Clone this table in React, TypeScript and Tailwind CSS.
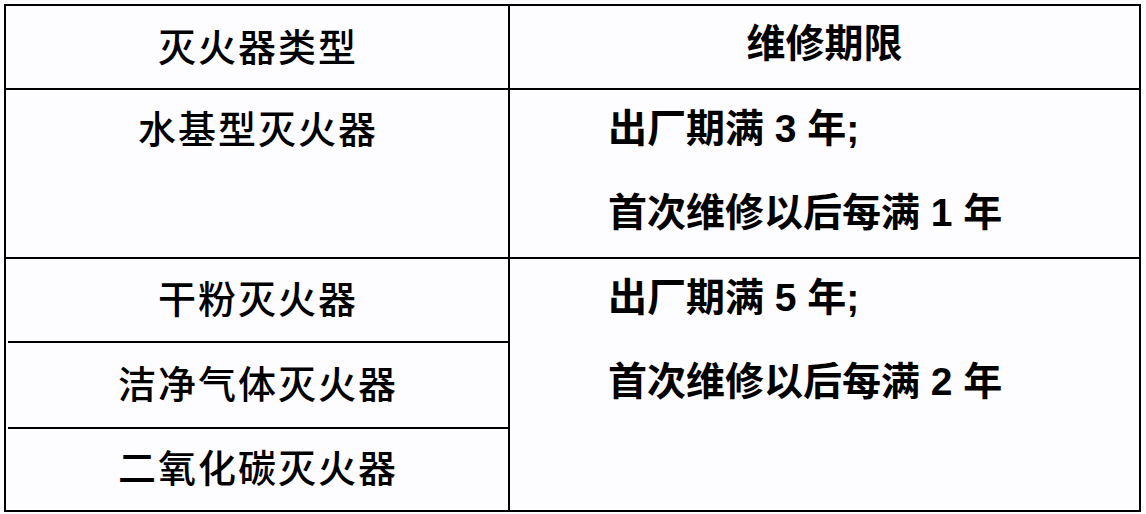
export default function App() {
  const leftFont = "font-['Noto_Sans_CJK_SC','Noto_Sans_CJK_JP',serif] font-medium text-[38px] tracking-[2px] pl-[2px]";
  const rightFont = "font-['Liberation_Sans','Noto_Sans_CJK_SC',sans-serif] font-bold text-[39px]";

  return (
    <div className="w-[1146px] h-[514px] bg-[#fdfcfe] pt-[4px] pl-[4px] text-black">
      <div className="w-[1137px] border-2 border-black">
        {/* header */}
        <div className="flex h-[84px] border-b-2 border-black">
          <div className={`w-[504px] border-r-2 border-black flex items-center justify-center pb-[6px] ${leftFont}`}>
            灭火器类型
          </div>
          <div className={`flex-1 flex items-center justify-center pb-[6px] ${rightFont}`}>
            维修期限
          </div>
        </div>

        {/* water-based */}
        <div className="flex h-[169px] border-b-2 border-black">
          <div className={`w-[504px] border-r-2 border-black text-center leading-[74px] ${leftFont}`}>
            水基型灭火器
          </div>
          <div className={`flex-1 pl-[98px] leading-[84px] -mt-[3px] ${rightFont}`}>
            <div>出厂期满 3 年;</div>
            <div>首次维修以后每满 1 年</div>
          </div>
        </div>

        {/* powder / gas / CO2 */}
        <div className="flex h-[251px]">
          <div className={`w-[504px] border-r-2 border-black flex flex-col ${leftFont}`}>
            <div className="h-[84px] border-b-2 border-black flex items-center justify-center pb-[8px]">干粉灭火器</div>
            <div className="h-[86px] border-b-2 border-black flex items-center justify-center pb-[8px]">洁净气体灭火器</div>
            <div className="flex-1 flex items-center justify-center pb-[8px]">二氧化碳灭火器</div>
          </div>
          <div className={`flex-1 pl-[98px] leading-[84px] -mt-[3px] ${rightFont}`}>
            <div>出厂期满 5 年;</div>
            <div>首次维修以后每满 2 年</div>
          </div>
        </div>
      </div>
    </div>
  );
}
